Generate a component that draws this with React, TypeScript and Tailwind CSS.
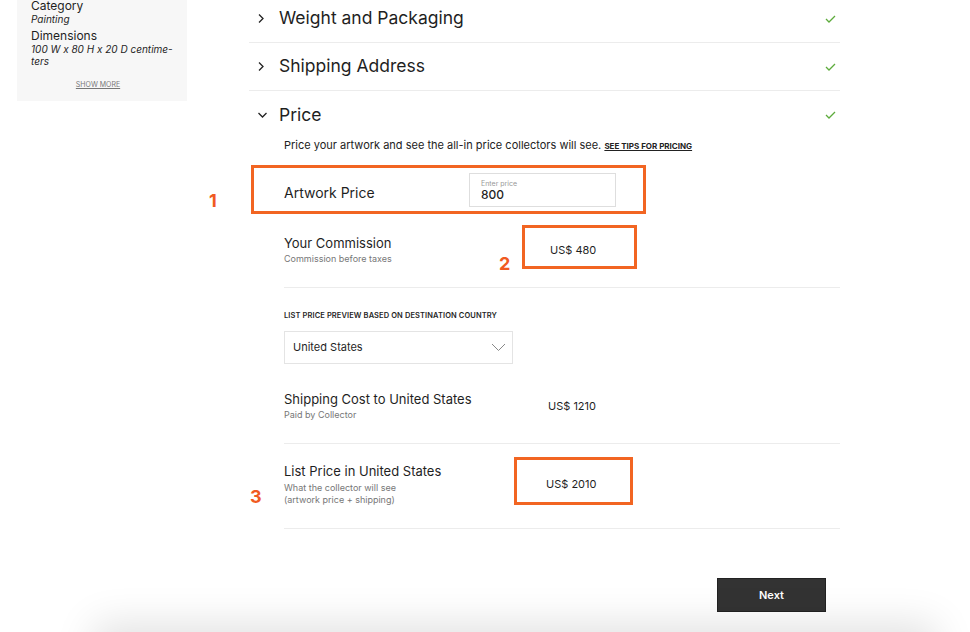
const font = { fontFamily: "Inter, 'Noto Sans', sans-serif" };

function ChevronRight() {
  return (
    <svg width="8" height="11" viewBox="0 0 8 11" fill="none">
      <path d="M2 1.5L6 5.5L2 9.5" stroke="#222" strokeWidth="1.3" />
    </svg>
  );
}

function ChevronDown() {
  return (
    <svg width="11" height="8" viewBox="0 0 11 8" fill="none">
      <path d="M1.5 2L5.5 6L9.5 2" stroke="#222" strokeWidth="1.3" />
    </svg>
  );
}

function Check() {
  return (
    <svg width="11" height="8" viewBox="0 0 11 8" fill="none">
      <path d="M1 4L4 7L10 1" stroke="#5dab3c" strokeWidth="1.3" />
    </svg>
  );
}

function AccordionRow({ title, open, last }: { title: string; open?: boolean; last?: boolean }) {
  return (
    <div className={`h-[48px] flex items-center pl-[8px] pr-[4px] ${last ? "" : "border-b border-[#ececec]"}`}>
      <div className="w-[22px] flex items-center">{open ? <ChevronDown /> : <ChevronRight />}</div>
      <span className="text-[17.5px] text-[#1f1f1f] flex-1">{title}</span>
      <Check />
    </div>
  );
}

function Marker({ n, className }: { n: string; className: string }) {
  return <span className={`absolute text-[18px] font-bold text-[#f05a22] leading-none ${className}`}>{n}</span>;
}

export default function App() {
  return (
    <div className="relative h-[632px] w-[970px] overflow-hidden bg-white text-[#1f1f1f]" style={font}>
      <div className="flex items-start">
        {/* sidebar summary card */}
        <div className="ml-[17px] w-[170px] h-[101px] bg-[#f7f7f7] pl-[14px] pr-2">
          <div className="text-[12px] leading-[14px] -mt-px">Category</div>
          <div className="text-[10px] leading-[12px] italic">Painting</div>
          <div className="text-[12px] leading-[14px] mt-[4px]">Dimensions</div>
          <div className="text-[10px] leading-[12px] italic">
            100 W x 80 H x 20 D centime-
            <br />
            ters
          </div>
          <div className="text-[7px] leading-[10px] text-[#777] underline text-center mt-[13px] -ml-[14px]">SHOW MORE</div>
        </div>

        {/* main form */}
        <div className="ml-[62px] w-[591px] flex flex-col -mt-[5px]">
          <AccordionRow title="Weight and Packaging" />
          <AccordionRow title="Shipping Address" />
          <AccordionRow title="Price" open last />

          <div className="pl-[35px] flex flex-col -mt-px">
            <p className="text-[11px] leading-[14px] text-[#222]">
              Price your artwork and see the all-in price collectors will see.{" "}
              <span className="text-[8px] font-bold underline">SEE TIPS FOR PRICING</span>
            </p>

            <div className="mt-[20px] h-[34px] flex items-center">
              <span className="w-[185px] text-[14px] pt-[5px]">Artwork Price</span>
              <div className="w-[147px] h-[34px] border border-[#dedede] pl-[11px] flex flex-col justify-center">
                <span className="text-[7px] leading-[9px] text-[#999]">Enter price</span>
                <span className="text-[12px] leading-[14px] font-medium">800</span>
              </div>
            </div>

            <div className="mt-[28px] flex items-center">
              <div className="w-[266px]">
                <div className="text-[13px] leading-[16px]">Your Commission</div>
                <div className="text-[9px] leading-[12px] text-[#777] mt-[2px]">Commission before taxes</div>
              </div>
              <span className="text-[11px]">US$ 480</span>
            </div>

            <div className="mt-[22px] border-t border-[#ececec]" />

            <div className="mt-[23px] text-[7.5px] leading-[10px] font-semibold tracking-[0.1px]">
              LIST PRICE PREVIEW BASED ON DESTINATION COUNTRY
            </div>

            <div className="mt-[10px] w-[229px] h-[33px] border border-[#e4e4e4] flex items-center justify-between pl-[8px] pr-[6px]">
              <span className="text-[11px]">United States</span>
              <svg width="15" height="9" viewBox="0 0 15 9" fill="none">
                <path d="M1 1L7.5 7.5L14 1" stroke="#888" strokeWidth="1" />
              </svg>
            </div>

            <div className="mt-[27px] flex items-center">
              <div className="w-[264px]">
                <div className="text-[13px] leading-[16px]">Shipping Cost to United States</div>
                <div className="text-[9px] leading-[12px] text-[#777] mt-[2px]">Paid by Collector</div>
              </div>
              <span className="text-[11px]">US$ 1210</span>
            </div>

            <div className="mt-[22px] border-t border-[#ececec]" />

            <div className="mt-[19px] flex items-center">
              <div className="w-[262px]">
                <div className="text-[13px] leading-[16px]">List Price in United States</div>
                <div className="text-[9px] leading-[12px] text-[#777] mt-[3px]">
                  What the collector will see
                  <br />
                  (artwork price + shipping)
                </div>
              </div>
              <span className="text-[11px]">US$ 2010</span>
            </div>

            <div className="mt-[22px] border-t border-[#ececec]" />

            <button className="mt-[49px] self-end mr-[14px] w-[109px] h-[34px] bg-[#333] border border-[#222] text-white text-[11px] font-semibold">
              Next
            </button>
          </div>
        </div>
      </div>

      {/* annotation overlays */}
      <div className="absolute left-[251px] top-[165px] w-[395px] h-[49px] border-[3px] border-[#f26522]" />
      <div className="absolute left-[522px] top-[225px] w-[115px] h-[44px] border-[3px] border-[#f26522]" />
      <div className="absolute left-[514px] top-[457px] w-[119px] h-[48px] border-[3px] border-[#f26522]" />
      <Marker n="1" className="left-[209px] top-[192px]" />
      <Marker n="2" className="left-[499px] top-[255px]" />
      <Marker n="3" className="left-[250px] top-[488px]" />

      {/* footer bar shadow at the bottom edge */}
      <div className="absolute left-[112px] right-[52px] top-[642px] h-[40px] bg-white shadow-[0_0_40px_18px_rgba(0,0,0,0.12)]" />
    </div>
  );
}
